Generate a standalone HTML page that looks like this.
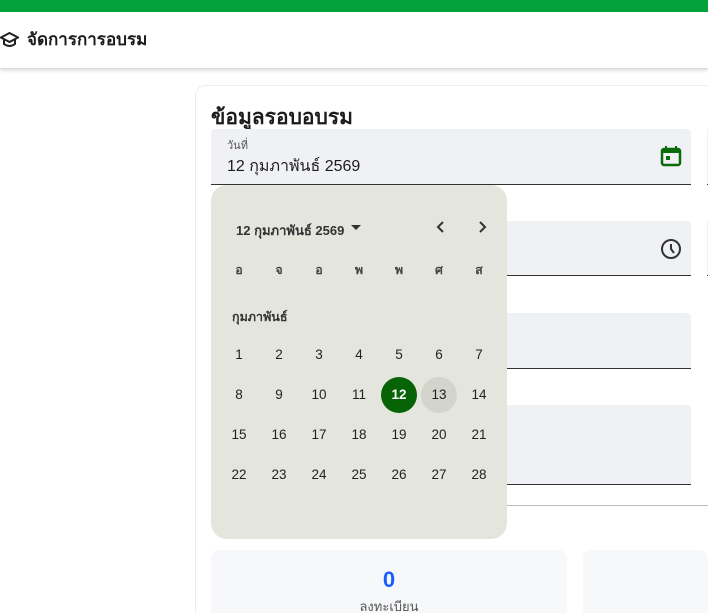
<!DOCTYPE html>
<html><head><meta charset="utf-8"><style>
*{box-sizing:border-box;margin:0;padding:0}
html{width:708px;height:613px;overflow:hidden}
body{width:708px;height:613px;overflow:hidden;background:#fff;font-family:"Liberation Sans","Noto Sans CJK SC",sans-serif;position:relative;color:#1c1c1c}
.top{position:absolute;left:0;top:0;width:708px;height:12px;background:#02a139}
.bar{position:absolute;left:0;top:12px;width:708px;height:57px;background:#fff;box-shadow:0 2px 3px rgba(0,0,0,.12);border-bottom:1px solid #ddd}
.bar .t{position:absolute;left:27px;top:19px;font-size:17px;font-weight:bold;line-height:1}
.card{position:absolute;left:195px;top:85px;width:513px;height:528px;border:1px solid #eee;border-right:none;border-bottom:none;border-radius:10px 0 0 0;background:#fff}
.h{position:absolute;left:211px;top:101px;font-size:21px;font-weight:bold}
.f{position:absolute;left:211px;width:480px;background:#f0f1f5;border-bottom:1px solid #333;border-radius:4px 4px 0 0}
.f2{position:absolute;left:707px;width:1px;background:#f0f1f5;border-bottom:1px solid #333}
.cal{position:absolute;left:211px;top:185px;width:296px;height:354px;background:#e4e5dd;border-radius:16px;font-size:13px}
.c{position:absolute;width:36px;height:36px;line-height:36px;text-align:center;margin-left:-18px;margin-top:-18px;border-radius:50%;font-size:13.5px;color:#222}
.stat{position:absolute;top:550px;height:63px;background:#f7f8fa;border-radius:8px 8px 0 0}
</style></head><body>
<div class="top"></div>
<div class="bar">
<svg style="position:absolute;left:0;top:19px" width="19" height="18" viewBox="0 0 19 18"><path d="M9.5 2 L18 6.5 L9.5 11 L1 6.5 Z" fill="none" stroke="#222" stroke-width="2"/><path d="M4 8.5 V13 Q9.5 17 15 13 V8.5" fill="none" stroke="#222" stroke-width="2"/></svg>
<div class="t">จัดการการอบรม</div></div>
<div class="card"></div>
<div class="h">ข้อมูลรอบอบรม</div>
<div class="f" style="top:129px;height:56px"><div style="position:absolute;left:16px;top:7px;font-size:11px;color:#555">วันที่</div><div style="position:absolute;left:16px;top:25px;font-size:16px">12 กุมภาพันธ์ 2569</div>
<svg style="position:absolute;left:449px;top:16px" width="22" height="22" viewBox="0 0 22 22"><rect x="2" y="4" width="18" height="16" rx="2" fill="none" stroke="#0a6b0a" stroke-width="2.5"/><rect x="2" y="4" width="18" height="4" fill="#0a6b0a"/><rect x="5" y="1" width="2" height="4" fill="#0a6b0a"/><rect x="15" y="1" width="2" height="4" fill="#0a6b0a"/><rect x="6" y="11" width="4" height="4" fill="#0a6b0a"/></svg></div>
<div class="f2" style="top:129px;height:56px"></div>
<div class="f" style="top:221px;height:55px"><svg style="position:absolute;left:449px;top:17px" width="22" height="22" viewBox="0 0 22 22"><circle cx="11" cy="11" r="9" fill="none" stroke="#333" stroke-width="2"/><path d="M11 6 V11 L14 15" fill="none" stroke="#333" stroke-width="2"/></svg></div>
<div class="f2" style="top:221px;height:55px"></div>
<div class="f" style="top:313px;height:56px"></div>
<div class="f" style="top:405px;height:80px"></div>
<div style="position:absolute;left:507px;top:505px;width:201px;height:1px;background:#bbb"></div>
<div class="cal">
<div style="position:absolute;left:25px;top:35px;font-size:13px;font-weight:bold;color:#333">12 กุมภาพันธ์ 2569</div>
<svg style="position:absolute;left:139px;top:40px" width="12" height="6"><path d="M1 0 L11 0 L6 5 Z" fill="#333"/></svg>
<svg style="position:absolute;left:224px;top:35px" width="12" height="14"><path d="M8 2 L3 7 L8 12" fill="none" stroke="#333" stroke-width="2"/></svg>
<svg style="position:absolute;left:265px;top:35px" width="12" height="14"><path d="M4 2 L9 7 L4 12" fill="none" stroke="#333" stroke-width="2"/></svg>
<div style="position:absolute;left:21px;top:122px;font-size:12.5px;font-weight:bold;color:#333">กุมภาพันธ์</div>
</div>
<div id="g"></div>
<div class="stat" style="left:211px;width:356px"><div style="text-align:center;margin-top:17px;font-size:22px;font-weight:bold;color:#1a5cff">0</div><div style="text-align:center;font-size:13px;color:#555;margin-top:3px">ลงทะเบียน</div></div>
<div class="stat" style="left:583px;width:125px"></div>
<script>
var g=document.getElementById('g'),h='';
var w=['อ','จ','อ','พ','พ','ศ','ส'];
for(var i=0;i<7;i++)h+='<div class="c" style="left:'+(239+40*i)+'px;top:270px;font-size:12.5px;font-weight:bold;color:#444">'+w[i]+'</div>';
for(var d=1;d<=28;d++){var i=(d-1)%7,r=Math.floor((d-1)/7);var s='';
if(d==12)s='background:#066406;color:#fff;font-weight:bold;';if(d==13)s='background:#d3d4cc;';
h+='<div class="c" style="'+s+'left:'+(239+40*i)+'px;top:'+(355+40*r)+'px">'+d+'</div>';}
g.innerHTML=h;
</script>
</body></html>
